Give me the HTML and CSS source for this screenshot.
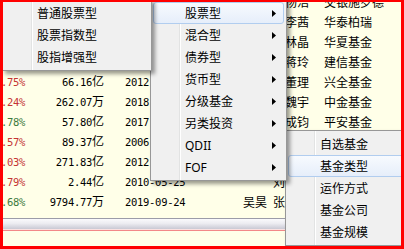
FILE: index.html
```html
<!DOCTYPE html>
<html lang="zh-CN">

<head>
    <meta charset="UTF-8" />
    <title>基金列表</title>
    <link rel="stylesheet" href="styles.css">
</head>

<body>
    <div class="frame">
        <!-- 基金列表 -->
        <ul class="list">
            <li><span class="pct num up">1.12%</span><span class="size num">31.05<i>亿</i></span><span class="date num">2015-03-18</span><span class="mgr">杨浩</span><span class="co">交银施罗德</span></li>
            <li><span class="pct num up">0.96%</span><span class="size num">8.42<i>亿</i></span><span class="date num">2016-07-21</span><span class="mgr">李茜</span><span class="co">华泰柏瑞</span></li>
            <li><span class="pct num up">1.31%</span><span class="size num">45.90<i>亿</i></span><span class="date num">2014-11-06</span><span class="mgr">林晶</span><span class="co">华夏基金</span></li>
            <li><span class="pct num down">0.27%</span><span class="size num">3.18<i>亿</i></span><span class="date num">2017-02-14</span><span class="mgr">蒋玲</span><span class="co">建信基金</span></li>
            <li><span class="pct num up">1.75%</span><span class="size num">66.16<i>亿</i></span><span class="date num">2012-06-20</span><span class="mgr">董理</span><span class="co">兴全基金</span></li>
            <li><span class="pct num up">1.24%</span><span class="size num">262.07<i>万</i></span><span class="date num">2018-04-11</span><span class="mgr">魏宇</span><span class="co">中金基金</span></li>
            <li><span class="pct num down">0.78%</span><span class="size num">57.80<i>亿</i></span><span class="date num">2017-08-29</span><span class="mgr">成钧</span><span class="co">平安基金</span></li>
            <li><span class="pct num up">1.57%</span><span class="size num">89.37<i>亿</i></span><span class="date num">2006-09-13</span><span class="mgr">王海峰</span><span class="co">易方达基金</span></li>
            <li><span class="pct num up">1.03%</span><span class="size num">271.83<i>亿</i></span><span class="date num">2012-12-05</span><span class="mgr">周蔚文</span><span class="co">中欧基金</span></li>
            <li><span class="pct num up">1.79%</span><span class="size num">2.44<i>亿</i></span><span class="date num">2010-05-25</span><span class="mgr">刘彦春</span><span class="co">景顺长城</span></li>
            <li><span class="pct num down">0.68%</span><span class="size num">9794.77<i>万</i></span><span class="date num">2019-09-24</span><span class="mgr">吴昊&ensp;张晓龙</span><span class="co">南方基金</span></li>
        </ul>
        <div class="hscroll"></div>
        <div class="split"></div>

        <!-- 右键菜单 -->
        <ul class="menu menu-root">
            <li>自选基金</li>
            <li class="on">基金类型</li>
            <li>运作方式</li>
            <li>基金公司</li>
            <li>基金规模</li>
        </ul>
        <ul class="menu menu-type">
            <li class="on">股票型<svg class="arrow" width="4" height="7"><path d="M0 0L4 3.5L0 7z" /></svg></li>
            <li>混合型<svg class="arrow" width="4" height="7"><path d="M0 0L4 3.5L0 7z" /></svg></li>
            <li>债券型<svg class="arrow" width="4" height="7"><path d="M0 0L4 3.5L0 7z" /></svg></li>
            <li>货币型<svg class="arrow" width="4" height="7"><path d="M0 0L4 3.5L0 7z" /></svg></li>
            <li>分级基金<svg class="arrow" width="4" height="7"><path d="M0 0L4 3.5L0 7z" /></svg></li>
            <li>另类投资<svg class="arrow" width="4" height="7"><path d="M0 0L4 3.5L0 7z" /></svg></li>
            <li>QDII<svg class="arrow" width="4" height="7"><path d="M0 0L4 3.5L0 7z" /></svg></li>
            <li>FOF<svg class="arrow" width="4" height="7"><path d="M0 0L4 3.5L0 7z" /></svg></li>
        </ul>
        <ul class="menu menu-stock">
            <li>普通股票型</li>
            <li>股票指数型</li>
            <li>股指增强型</li>
        </ul>
    </div>
</body>

</html>
```

FILE: styles.css
```css
* {
    margin: 0;
    padding: 0;
    box-sizing: border-box;
}

ul {
    list-style: none;
}

body {
    width: 404px;
    height: 249px;
    overflow: hidden;
}

.frame {
    position: relative;
    width: 404px;
    height: 249px;
    border: 3px solid #ff0000;
    border-top-width: 2px;
    background: #ffffe8;
    overflow: hidden;
    font: 12px "Noto Sans CJK SC", sans-serif;
    color: #000;
}

/* 列表 */
.list {
    margin-top: -10px;
}

.list li {
    display: flex;
    height: 20px;
    line-height: 20px;
    white-space: nowrap;
}

.num {
    font-family: "DejaVu Sans Mono", monospace;
    font-size: 10.5px;
    letter-spacing: -0.3px;
}

.num i {
    font: normal 12px "Noto Sans CJK SC", sans-serif;
    letter-spacing: 0;
}

.pct {
    display: flex;
    justify-content: flex-end;
    width: 22px;
    flex: none;
}

.up {
    color: #c53434;
}

.down {
    color: #3d7b3d;
}

.size {
    width: 79px;
    flex: none;
    text-align: right;
}

.date {
    width: 83px;
    flex: none;
    padding-left: 21px;
}

.mgr {
    width: 122px;
    flex: none;
    text-align: right;
}

.co {
    padding-left: 15px;
}

.hscroll {
    height: 11px;
    margin-top: 6px;
    border-top: 1px solid #9c9ca8;
    background: linear-gradient(#fafafc, #ececf1 45%, #c9c9d4);
}

.split {
    height: 2px;
    border-top: 1px solid #fbe1e1;
    background: #f28888;
}

/* 菜单 */
.menu {
    position: absolute;
    padding: 2px;
    border: 1px solid #979797;
    background: linear-gradient(to right, transparent 28px, #e2e3e3 28px, #e2e3e3 29px, #fff 29px, #fff 30px, transparent 30px), #f0f0f0;
    box-shadow: 3px 3px 4px rgba(0, 0, 0, 0.4);
    font-family: "Noto Sans", "Noto Sans CJK SC", sans-serif;
}

.menu li {
    display: flex;
    align-items: center;
    justify-content: space-between;
    height: 22px;
    padding: 0 7px 0 31px;
    border: 1px solid transparent;
    border-radius: 3px;
    white-space: nowrap;
}

.menu li.on {
    border-color: #b1cdef;
    background: linear-gradient(#f7fafe, #e6eefa);
}

.menu .arrow {
    fill: #000;
}

.menu-stock {
    left: -1px;
    top: -3px;
    width: 150px;
    z-index: 3;
}

.menu-type {
    left: 147px;
    top: -3px;
    width: 137px;
    z-index: 2;
}

.menu-root {
    left: 282px;
    top: 128px;
    width: 130px;
    z-index: 1;
}
```
